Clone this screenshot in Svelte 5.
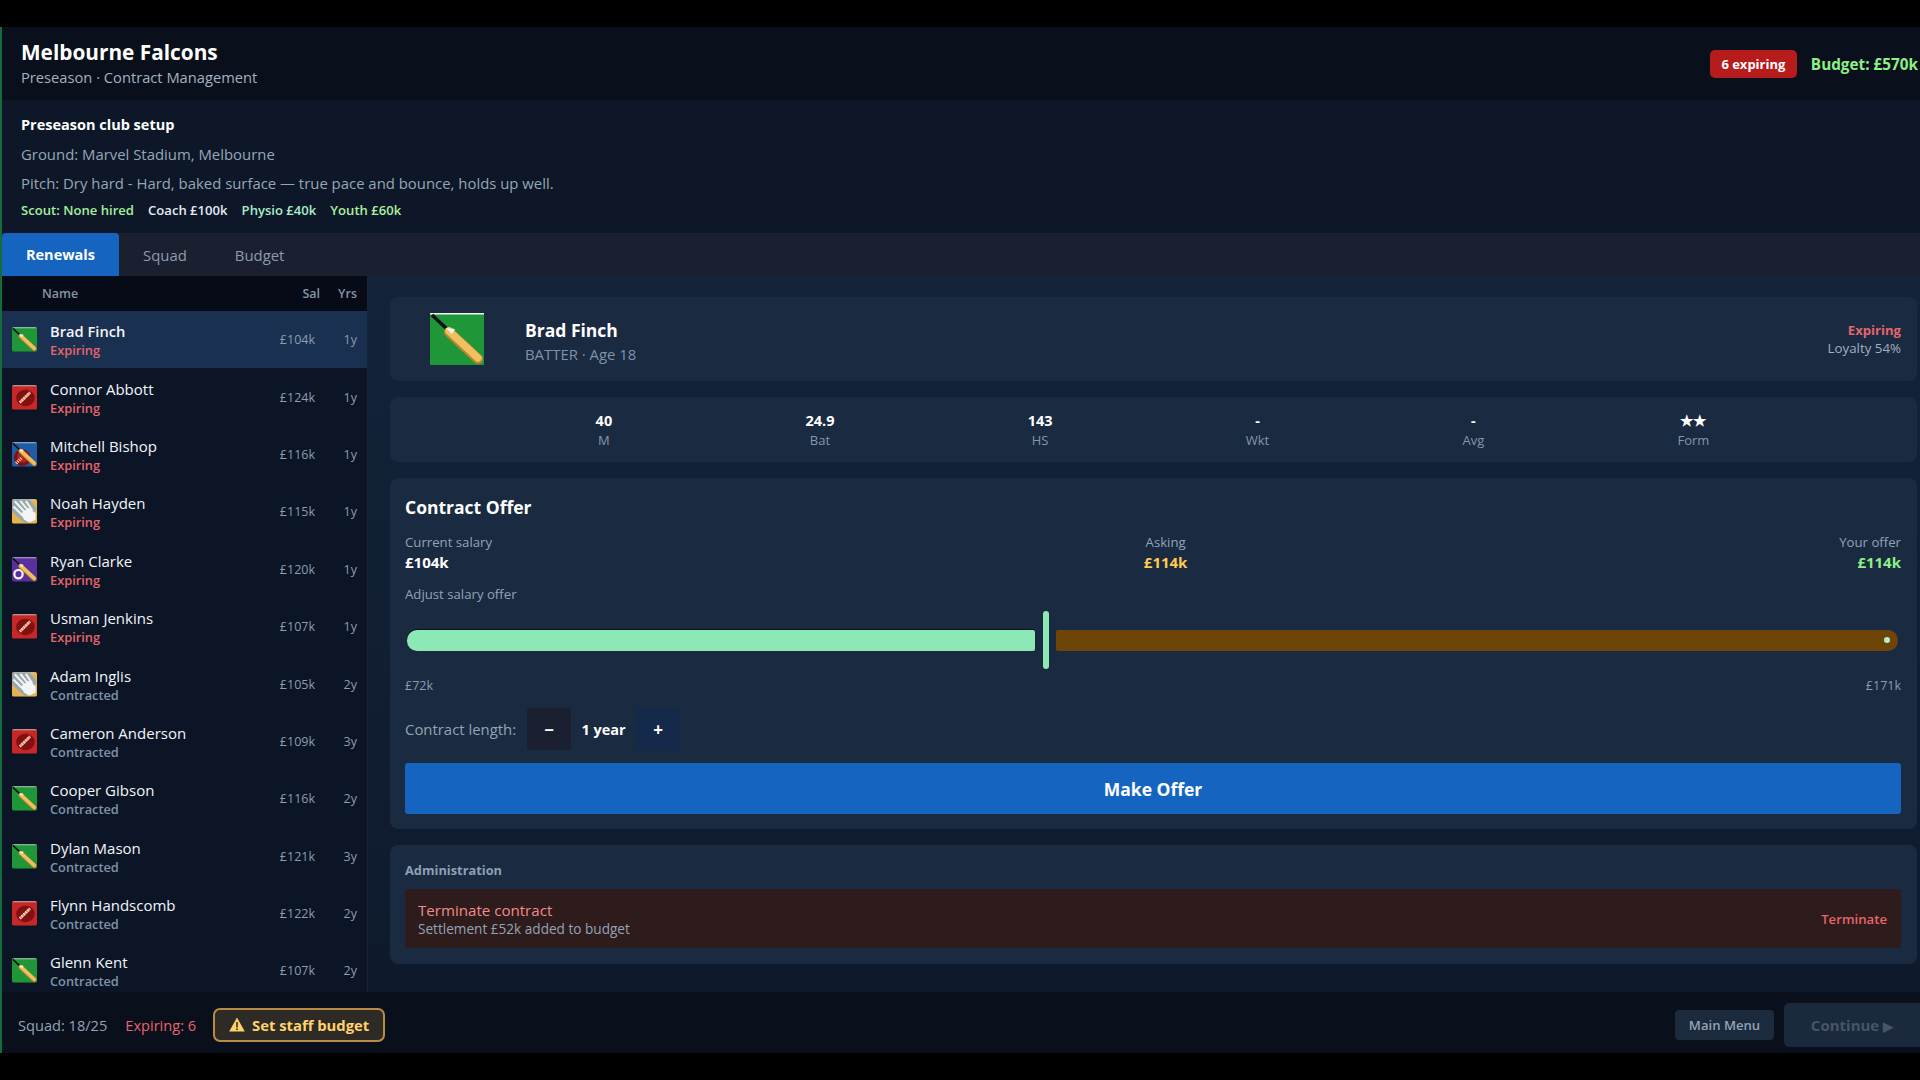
<script>
	const players = [
		{ name: 'Brad Finch', kind: 'bat', status: 'Expiring', sal: '£104k', yrs: '1y' },
		{ name: 'Connor Abbott', kind: 'ball', status: 'Expiring', sal: '£124k', yrs: '1y' },
		{ name: 'Mitchell Bishop', kind: 'both', status: 'Expiring', sal: '£116k', yrs: '1y' },
		{ name: 'Noah Hayden', kind: 'gloves', status: 'Expiring', sal: '£115k', yrs: '1y' },
		{ name: 'Ryan Clarke', kind: 'spin', status: 'Expiring', sal: '£120k', yrs: '1y' },
		{ name: 'Usman Jenkins', kind: 'ball', status: 'Expiring', sal: '£107k', yrs: '1y' },
		{ name: 'Adam Inglis', kind: 'gloves', status: 'Contracted', sal: '£105k', yrs: '2y' },
		{ name: 'Cameron Anderson', kind: 'ball', status: 'Contracted', sal: '£109k', yrs: '3y' },
		{ name: 'Cooper Gibson', kind: 'bat', status: 'Contracted', sal: '£116k', yrs: '2y' },
		{ name: 'Dylan Mason', kind: 'bat', status: 'Contracted', sal: '£121k', yrs: '3y' },
		{ name: 'Flynn Handscomb', kind: 'ball', status: 'Contracted', sal: '£122k', yrs: '2y' },
		{ name: 'Glenn Kent', kind: 'bat', status: 'Contracted', sal: '£107k', yrs: '2y' }
	];

	const stats = [
		['40', 'M'],
		['24.9', 'Bat'],
		['143', 'HS'],
		['-', 'Wkt'],
		['-', 'Avg'],
		['★★', 'Form']
	];

	const backgrounds = {
		bat: '#1f9638',
		ball: '#c62828',
		both: '#1f5ca6',
		gloves: '#e6b44c',
		spin: '#5a2fa0'
	};
</script>

{#snippet role(kind, cls)}
	<svg class={cls} viewBox="0 0 54 52" aria-hidden="true">
		<rect width="54" height="52" fill={backgrounds[kind]} />
		<rect width="54" height="1.5" fill="#f4f4f4" />
		{#if kind === 'ball'}
			<ellipse cx="29" cy="27" rx="20" ry="18" fill="#821010" />
			<path d="M17 37 L39 15" stroke="#d98f78" stroke-width="6" />
			<path d="M17 37 L39 15" stroke="#f7d8c4" stroke-width="6" stroke-dasharray="2.5 3.5" />
		{/if}
		{#if kind === 'both'}
			<circle cx="22" cy="33" r="18" fill="#7c1212" />
			<circle cx="24" cy="31" r="13" fill="#b02020" />
			<path d="M9 45 L22 32" stroke="#f2c4a6" stroke-width="7" stroke-dasharray="2.5 2" />
		{/if}
		{#if kind === 'gloves'}
			<path d="M0 0 H38 L54 20 L28 52 L0 26 Z" fill="#9aa6ac" />
			<path d="M6 4 L32 32 M18 3 L38 28 M30 3 L44 24 M3 15 L26 38" stroke="#f0f3f1" stroke-width="4.5" />
			<path d="M20 30 L36 18 L51 30 L51 44 L38 50 L26 44 Z" fill="#f2f4f5" />
		{/if}
		{#if kind === 'spin'}
			<circle cx="14" cy="36" r="9" fill="none" stroke="#f2f2f2" stroke-width="5" />
		{/if}
		{#if kind === 'bat' || kind === 'both' || kind === 'spin'}
			<path d="M2 2 L17 16" stroke="#111" stroke-width="3.5" />
			<path d="M19 19 L48 46" stroke="#b8862f" stroke-width="10" stroke-linecap="round" />
			<path d="M19 18 L48 45" stroke="#f0c060" stroke-width="7.5" stroke-linecap="round" />
			<path d="M16 15 L22 21 L25 16 Z" fill="#f4f4f4" />
		{/if}
	</svg>
{/snippet}

<div class="app">
	<header class="top">
		<div>
			<h1>Melbourne Falcons</h1>
			<p>Preseason · Contract Management</p>
		</div>
		<div class="top-right">
			<span class="badge">6 expiring</span>
			<span class="budget">Budget: £570k</span>
		</div>
	</header>

	<section class="setup">
		<h2>Preseason club setup</h2>
		<p>Ground: Marvel Stadium, Melbourne</p>
		<p>Pitch: Dry hard - Hard, baked surface — true pace and bounce, holds up well.</p>
		<div class="staff">
			<span class="scout">Scout: None hired</span>
			<span class="coach">Coach £100k</span>
			<span class="physio">Physio £40k</span>
			<span class="youth">Youth £60k</span>
		</div>
	</section>

	<nav class="tabs">
		<button class="tab active">Renewals</button>
		<button class="tab">Squad</button>
		<button class="tab">Budget</button>
	</nav>

	<main class="body">
		<aside class="list">
			<div class="list-head">
				<span class="head-name">Name</span>
				<span>Sal</span>
				<span class="head-yrs">Yrs</span>
			</div>
			<div class="rows">
				{#each players as p, i}
					<div class="row" class:selected={i === 0}>
						{@render role(p.kind, 'row-icon')}
						<div class="who">
							<div class="name">{p.name}</div>
							<div class="status" class:expiring={p.status === 'Expiring'}>{p.status}</div>
						</div>
						<span class="sal">{p.sal}</span>
						<span class="yrs">{p.yrs}</span>
					</div>
				{/each}
			</div>
		</aside>

		<div class="detail">
			<section class="card profile">
				{@render role('bat', 'big-icon')}
				<div class="profile-text">
					<div class="profile-name">Brad Finch</div>
					<div class="profile-sub">BATTER · Age 18</div>
				</div>
				<div class="profile-right">
					<div class="exp">Expiring</div>
					<div class="loyal">Loyalty 54%</div>
				</div>
			</section>

			<section class="card stats">
				{#each stats as [value, label]}
					<div class="stat">
						<div class="stat-value">{value}</div>
						<div class="stat-label">{label}</div>
					</div>
				{/each}
			</section>

			<section class="card offer">
				<h3>Contract Offer</h3>
				<div class="figures">
					<div>
						<div class="fig-label">Current salary</div>
						<div class="fig-value">£104k</div>
					</div>
					<div class="center">
						<div class="fig-label">Asking</div>
						<div class="fig-value asking">£114k</div>
					</div>
					<div class="right">
						<div class="fig-label">Your offer</div>
						<div class="fig-value yours">£114k</div>
					</div>
				</div>
				<div class="fig-label adjust">Adjust salary offer</div>
				<div class="slider">
					<div class="fill"></div>
					<div class="thumb"></div>
					<div class="rest"><span class="dot"></span></div>
				</div>
				<div class="range">
					<span>£72k</span>
					<span>£171k</span>
				</div>
				<div class="length">
					<span class="length-label">Contract length:</span>
					<button class="step minus">−</button>
					<span class="length-value">1 year</span>
					<button class="step plus">+</button>
				</div>
				<button class="make">Make Offer</button>
			</section>

			<section class="card admin">
				<h4>Administration</h4>
				<div class="terminate">
					<div>
						<div class="term-title">Terminate contract</div>
						<div class="term-sub">Settlement £52k added to budget</div>
					</div>
					<span class="term-action">Terminate</span>
				</div>
			</section>
		</div>
	</main>

	<footer class="bottom">
		<span class="squad">Squad: 18/25</span>
		<span class="expiring-count">Expiring: 6</span>
		<button class="staff-btn">
			<svg viewBox="0 0 16 15" width="16" height="15" aria-hidden="true">
				<path d="M8 0.5 L15.8 14.5 H0.2 Z" fill="#ffd36b" />
				<rect x="7.2" y="5" width="1.6" height="5.5" fill="#3a2f20" />
				<rect x="7.2" y="11.4" width="1.6" height="1.7" fill="#3a2f20" />
			</svg>
			Set staff budget
		</button>
		<span class="spacer"></span>
		<button class="menu">Main Menu</button>
		<button class="continue">Continue <span class="play">▶</span></button>
	</footer>
</div>

<style>
	:global(body) {
		background: #000;
	}

	.app {
		box-sizing: border-box;
		margin-top: 27px;
		height: 1026px;
		display: flex;
		flex-direction: column;
		border-left: 2px solid #146c3c;
		font-family: 'Open Sans', 'Noto Sans', sans-serif;
		color: #fff;
		overflow: hidden;
	}

	button {
		font-family: inherit;
		border: none;
		padding: 0;
	}

	h1,
	h2,
	h3,
	h4,
	p {
		margin: 0;
	}

	.top {
		height: 73px;
		flex: none;
		box-sizing: border-box;
		background: #0a0f1c;
		display: flex;
		justify-content: space-between;
		align-items: center;
		padding: 0 2px 0 19px;
	}

	h1 {
		font-size: 20.8px;
		line-height: 25px;
		font-weight: 700;
	}

	.top p {
		font-size: 14.7px;
		line-height: 20px;
		margin-top: 2px;
		color: #a3b1c0;
	}

	.top-right {
		display: flex;
		align-items: center;
		gap: 14px;
	}

	.badge {
		background: #b71c1c;
		border-radius: 5px;
		font-size: 13px;
		font-weight: 700;
		line-height: 28px;
		width: 87px;
		text-align: center;
	}

	.budget {
		font-size: 15.3px;
		font-weight: 700;
		color: #8cf088;
	}

	.setup {
		height: 133px;
		flex: none;
		box-sizing: border-box;
		background: #0d1728;
		padding: 14px 19px 0;
	}

	h2 {
		font-size: 14.5px;
		font-weight: 700;
		line-height: 22px;
	}

	.setup p {
		font-size: 14.9px;
		line-height: 20px;
		margin-top: 9px;
		color: #97a6b6;
	}

	.setup h2 + p {
		margin-top: 8px;
	}

	.staff {
		display: flex;
		gap: 14px;
		font-size: 13.1px;
		font-weight: 600;
		line-height: 18px;
		margin-top: 8px;
	}

	.scout {
		color: #a5ef9c;
	}

	.coach {
		color: #e3ebf2;
	}

	.physio {
		color: #a8ecc8;
	}

	.youth {
		color: #a9f09e;
	}

	.tabs {
		height: 43px;
		flex: none;
		background: #1a2030;
		display: flex;
	}

	.tab {
		background: transparent;
		color: #8d9bad;
		font-size: 14.9px;
		padding: 0 24px;
	}

	.tab.active {
		width: 117px;
		padding: 0;
		background: #1565c0;
		color: #fff;
		font-weight: 700;
		font-size: 14.5px;
		border-radius: 4px 4px 0 0;
	}

	.body {
		flex: 1;
		min-height: 0;
		display: flex;
	}

	.list {
		width: 365px;
		flex: none;
		background: #0c1526;
		display: flex;
		flex-direction: column;
	}

	.list-head {
		height: 35px;
		flex: none;
		background: #070b18;
		display: flex;
		align-items: center;
		gap: 18px;
		padding: 0 10px 0 40px;
		font-size: 12.5px;
		font-weight: 600;
		color: #8494a8;
	}

	.head-name {
		flex: 1;
	}

	.rows {
		flex: 1;
		min-height: 0;
		overflow: hidden;
	}

	.row {
		height: 57.4px;
		box-sizing: border-box;
		display: flex;
		align-items: center;
		padding: 0 10px 0 10px;
	}

	.row.selected {
		background: #1a3050;
	}

	.row.selected .name {
		font-weight: 600;
		font-size: 14.7px;
	}

	:global(.row-icon) {
		width: 25px;
		height: 25px;
		flex: none;
		border-radius: 2px;
		margin-right: 13px;
	}

	.who {
		flex: 1;
		min-width: 0;
		padding-top: 2px;
	}

	.name {
		font-size: 15px;
		line-height: 20px;
		color: #f1f5f9;
	}

	.status {
		font-size: 12.8px;
		font-weight: 600;
		line-height: 19px;
		color: #7e93a8;
	}

	.status.expiring {
		color: #e5656c;
	}

	.sal {
		font-size: 12.5px;
		color: #8d9cae;
	}

	.yrs {
		width: 42px;
		text-align: right;
		font-size: 12.5px;
		color: #8d9cae;
	}

	.detail {
		flex: 1;
		min-width: 0;
		background: linear-gradient(#14233a, #0e1a2c);
		border-left: 1px solid #172437;
		padding: 21px 3px 0 22px;
		display: flex;
		flex-direction: column;
		gap: 16px;
	}

	.card {
		background: #1a2a40;
		border-radius: 8px;
		box-sizing: border-box;
		flex: none;
	}

	.profile {
		height: 84px;
		display: flex;
		align-items: center;
		padding: 0 16px 0 40px;
	}

	:global(.big-icon) {
		width: 54px;
		height: 52px;
		flex: none;
		margin-right: 41px;
	}

	.profile-text {
		flex: 1;
		padding-top: 4px;
	}

	.profile-name {
		font-size: 17.5px;
		font-weight: 700;
		line-height: 24px;
	}

	.profile-sub {
		font-size: 14.9px;
		line-height: 20px;
		margin-top: 2px;
		color: #7f92a8;
	}

	.profile-right {
		text-align: right;
	}

	.exp {
		font-size: 13.1px;
		font-weight: 700;
		line-height: 18px;
		color: #e5656c;
	}

	.loyal {
		font-size: 13.3px;
		line-height: 18px;
		color: #a0afc0;
	}

	.stats {
		height: 65px;
		display: flex;
		justify-content: space-around;
		align-items: center;
		padding: 0 111px 0 109px;
		text-align: center;
	}

	.stat-value {
		font-size: 14.5px;
		font-weight: 700;
		line-height: 19px;
	}

	.stat-label {
		font-size: 13px;
		line-height: 18px;
		margin-top: 1px;
		color: #8496aa;
	}

	.offer {
		height: 351px;
		padding: 16px 16px 0 15px;
	}

	h3 {
		font-size: 17.5px;
		font-weight: 700;
		line-height: 26px;
	}

	.figures {
		display: flex;
		justify-content: space-between;
		margin-top: 13px;
	}

	.center {
		text-align: center;
	}

	.right {
		text-align: right;
	}

	.fig-label {
		font-size: 13.2px;
		line-height: 19px;
		color: #93a3b5;
	}

	.fig-value {
		font-size: 15px;
		font-weight: 700;
		line-height: 20px;
	}

	.asking {
		color: #ffcc4d;
	}

	.yours {
		color: #8cf088;
	}

	.adjust {
		margin-top: 13px;
	}

	.slider {
		display: flex;
		align-items: center;
		height: 58px;
		margin-top: 7px;
		padding: 0 3px 0 2px;
	}

	.fill {
		width: 628px;
		height: 21px;
		background: #8ce8b4;
		border-radius: 10px 2px 2px 10px;
		box-shadow: 0 -1px 0 #0a0f1c;
	}

	.thumb {
		width: 6px;
		height: 58px;
		background: #8ce8b4;
		border-radius: 3px;
		margin: 0 7px 0 8px;
	}

	.rest {
		flex: 1;
		height: 21px;
		background: #6d4508;
		border-radius: 2px 10px 10px 2px;
		display: flex;
		align-items: center;
		justify-content: flex-end;
		padding-right: 8px;
	}

	.dot {
		width: 6px;
		height: 6px;
		border-radius: 50%;
		background: #b6f0c6;
	}

	.range {
		display: flex;
		justify-content: space-between;
		font-size: 12.5px;
		line-height: 18px;
		margin-top: 8px;
		color: #8d9cae;
	}

	.length {
		display: flex;
		align-items: center;
		height: 42px;
		margin-top: 13px;
	}

	.length-label {
		width: 122px;
		font-size: 14.9px;
		color: #93a3b5;
	}

	.step {
		width: 44px;
		height: 42px;
		border-radius: 3px;
		color: #fff;
		font-size: 17px;
		font-weight: 700;
	}

	.minus {
		background: #1a2030;
	}

	.plus {
		background: #152a4a;
	}

	.length-value {
		width: 65px;
		text-align: center;
		font-size: 14.5px;
		font-weight: 700;
	}

	.make {
		display: block;
		width: 100%;
		height: 51px;
		margin-top: 13px;
		background: #1565c0;
		border-radius: 3px;
		color: #fff;
		font-size: 17.5px;
		font-weight: 700;
	}

	.admin {
		height: 119px;
		padding: 14px 16px 0 15px;
	}

	h4 {
		font-size: 12.8px;
		font-weight: 700;
		line-height: 22px;
		color: #8ea0b4;
	}

	.terminate {
		height: 59px;
		margin-top: 8px;
		box-sizing: border-box;
		background: #2e1b1c;
		border-radius: 3px;
		display: flex;
		justify-content: space-between;
		align-items: center;
		padding: 0 14px 0 13px;
	}

	.term-title {
		font-size: 15.1px;
		line-height: 19px;
		color: #f28b8b;
	}

	.term-sub {
		font-size: 13.6px;
		line-height: 17px;
		color: #93a3b5;
	}

	.term-action {
		font-size: 13.2px;
		font-weight: 600;
		color: #e5656c;
	}

	.bottom {
		height: 61px;
		flex: none;
		box-sizing: border-box;
		background: #0a0f1c;
		display: flex;
		align-items: center;
		padding: 4px 0 0 16px;
		font-size: 14.6px;
	}

	.squad {
		color: #93a3b5;
		margin-right: 18px;
	}

	.expiring-count {
		color: #e5656c;
		margin-right: 17px;
	}

	.staff-btn {
		height: 34px;
		width: 172px;
		background: #2e2a26;
		border: 2px solid #b98c45;
		border-radius: 7px;
		color: #ffd36b;
		font-size: 14.8px;
		font-weight: 700;
		display: flex;
		align-items: center;
		justify-content: center;
		gap: 7px;
		box-sizing: border-box;
	}

	.spacer {
		flex: 1;
	}

	.menu {
		width: 99px;
		height: 30px;
		background: #1b2a3c;
		border-radius: 4px;
		color: #93a3b5;
		font-size: 13.1px;
		font-weight: 600;
		margin-right: 10px;
	}

	.continue {
		width: 136px;
		height: 44px;
		background: #1a2a3c;
		border-radius: 5px 0 0 5px;
		color: #465569;
		font-size: 15px;
		font-weight: 700;
	}

	.play {
		font-size: 13px;
	}
</style>
